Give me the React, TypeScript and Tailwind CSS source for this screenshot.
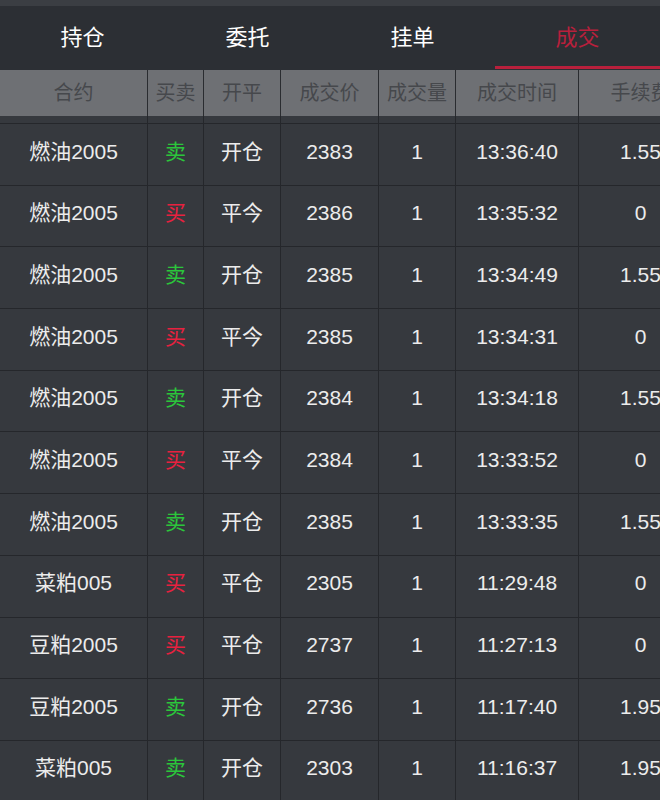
const TABS = ['持仓', '委托', '挂单', '成交']

const COLS = ['合约', '买卖', '开平', '成交价', '成交量', '成交时间', '手续费']

const ROWS: Array<[string, '买' | '卖', string, string, string, string, string]> = [
  ['燃油2005', '卖', '开仓', '2383', '1', '13:36:40', '1.55'],
  ['燃油2005', '买', '平今', '2386', '1', '13:35:32', '0'],
  ['燃油2005', '卖', '开仓', '2385', '1', '13:34:49', '1.55'],
  ['燃油2005', '买', '平今', '2385', '1', '13:34:31', '0'],
  ['燃油2005', '卖', '开仓', '2384', '1', '13:34:18', '1.55'],
  ['燃油2005', '买', '平今', '2384', '1', '13:33:52', '0'],
  ['燃油2005', '卖', '开仓', '2385', '1', '13:33:35', '1.55'],
  ['菜粕005', '买', '平仓', '2305', '1', '11:29:48', '0'],
  ['豆粕2005', '买', '平仓', '2737', '1', '11:27:13', '0'],
  ['豆粕2005', '卖', '开仓', '2736', '1', '11:17:40', '1.95'],
  ['菜粕005', '卖', '开仓', '2303', '1', '11:16:37', '1.95'],
]

const GRID = 'grid grid-cols-[148px_56px_77px_98px_77px_123px_124px]'

export default function App() {
  return (
    <div
      className="w-[660px] h-[800px] overflow-hidden bg-[#36393e]"
      style={{ fontFamily: '"Liberation Sans", "Noto Sans CJK SC", sans-serif' }}
    >
      <div className="h-[6px] bg-[#3b3e43]" />
      <div className="flex h-[64px] bg-[#2c2f34]">
        {TABS.map((t, i) => (
          <div key={t} className="relative flex-1 flex items-center justify-center pb-[2px]">
            <span className={`text-[22px] ${i === 3 ? 'text-[#b8203c]' : 'text-white'}`}>{t}</span>
            {i === 3 && <div className="absolute left-0 right-0 bottom-[1px] h-[3px] bg-[#b8203c]" />}
          </div>
        ))}
      </div>
      <div className={`${GRID} h-[46px] bg-[#6e7074]`}>
        {COLS.map((c) => (
          <div
            key={c}
            className="flex items-center justify-center border-r border-[#2a2c30] text-[20px] text-[#46484c]"
          >
            {c}
          </div>
        ))}
      </div>
      <div className={`${GRID} h-[7px]`}>
        {COLS.map((c) => (
          <div key={c} className="border-r border-[#25272b]" />
        ))}
      </div>
      {ROWS.map((r, ri) => (
        <div key={ri} className={`${GRID} h-[61.7px] border-t border-[#25272b]`}>
          {r.map((v, ci) => (
            <div
              key={ci}
              className={`flex items-center justify-center pb-[6px] border-r border-[#25272b] text-[21px] ${
                ci === 1 ? (v === '买' ? 'text-[#e8213f]' : 'text-[#2bc63b]') : 'text-[#ececec]'
              }`}
            >
              {v}
            </div>
          ))}
        </div>
      ))}
    </div>
  )
}
